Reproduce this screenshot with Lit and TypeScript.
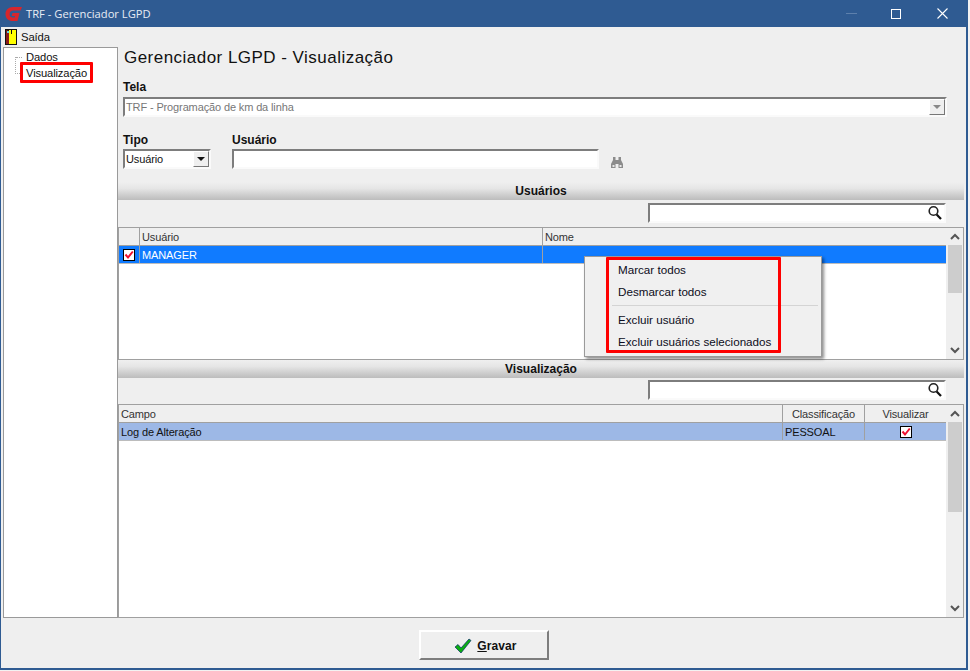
import { LitElement, html, css, svg } from "lit";
import { customElement } from "lit/decorators.js";

const check = html`<span class="chk"><svg width="10" height="10" viewBox="0 0 10 10"><path d="M1.5 4.5 L4 7.5 L8.8 1.5" fill="none" stroke="#ee1030" stroke-width="2"/></svg></span>`;
const lens = html`<svg class="lens" width="16" height="16" viewBox="0 0 16 16"><circle cx="6.5" cy="6" r="4.3" fill="none" stroke="#222" stroke-width="1.6"/><path d="M9.6 9.4 L14 14" stroke="#111" stroke-width="2.2"/></svg>`;
const upArrow = svg`<path d="M1 6 L5 2 L9 6" fill="none" stroke="#555" stroke-width="2"/>`;
const downArrow = svg`<path d="M1 2 L5 6 L9 2" fill="none" stroke="#555" stroke-width="2"/>`;

@customElement("app-root")
export class AppRoot extends LitElement {
  static styles = css`
    :host { display: block; width: 970px; height: 671px; background: #f2f2f2; font-family: "Liberation Sans", Arial, sans-serif; font-size: 11px; letter-spacing: -0.13px; color: #111; overflow: hidden; }
    .win { position: relative; width: 968px; height: 670px; box-sizing: border-box; background: #efefef; border: solid #2f5b92; border-width: 0 2px 2px 1px; display: flex; flex-direction: column; }
    .title { height: 27px; flex: none; background: #2f5b92; color: #fff; display: flex; align-items: center; padding-left: 4px; }
    .title .logo { margin-right: 4px; }
    .title .name { flex: 1; color: #e8edf4; font-family: "Open Sans", sans-serif; font-size: 11.2px; letter-spacing: 0; }
    .wb { display: flex; align-items: center; }
    .wb svg { display: block; }
    .wb .b1 { margin-right: 34px; }
    .wb .b2 { margin-right: 36px; }
    .wb .b3 { margin-right: 18px; }
    .menu { height: 20px; flex: none; display: flex; align-items: center; padding-left: 4px; gap: 4px; background: #efefef; font-size: 11.3px; }
    .content { height: 571px; flex: none; display: flex; padding-left: 2px; }
    .tree { width: 115px; box-sizing: border-box; flex: none; background: #fff; border: 1px solid #9a9a9a; height: 571px; position: relative; padding: 1px 0 0 22px; line-height: 16px; font-size: 11.2px; }
    .tree .n { display: block; height: 16px; }
    .tree .dots { position: absolute; left: 11px; top: 9px; width: 6px; height: 16px; border-left: 1px dotted #aaa; border-bottom: 1px dotted #aaa; }
    .tree .dots::before { content: ""; position: absolute; left: 0; top: 0; width: 6px; border-top: 1px dotted #aaa; }
    .main { flex: 1; display: flex; flex-direction: column; min-width: 0; }
    h1 { font-weight: 400; font-size: 17px; letter-spacing: 0.47px; margin: 0 0 0 6px; height: 31px; line-height: 21px; color: #111; }
    .lbl { font-weight: 700; font-size: 12px; letter-spacing: 0; line-height: 14px; }
    .tela { margin: 2px 0 0 5px; width: 824px; }
    .field { height: 20px; box-sizing: border-box; background: #fff; border: 2px solid; border-color: #7d7d7d #fafafa #fafafa #7d7d7d; display: flex; align-items: center; position: relative; }
    .tela .field { margin-top: 3px; padding-left: 1px; color: #777; }
    .cbtn { position: absolute; right: 0; top: 0; bottom: 0; width: 16px; background: #efefef; border: 1px solid; border-color: #fff #777 #777 #fff; box-sizing: border-box; display: flex; align-items: center; justify-content: center; }
    .tri { width: 0; height: 0; border: 4px solid transparent; border-top: 4px solid #888; border-bottom: 0; }
    .tri.dark { border-top-color: #111; }
    .row { display: flex; margin: 16px 0 0 5px; }
    .tipo { width: 88px; margin-right: 21px; }
    .tipo .field { margin-top: 2px; padding-left: 1px; }
    .user { width: 367px; }
    .user .field { margin-top: 2px; }
    .bino { align-self: flex-end; margin: 0 0 1px 12px; height: 11px; }
    .bar { height: 18px; background: linear-gradient(#efefef 0%, #e6e6e6 35%, #bcbcbc 100%); text-align: center; font-weight: 700; font-size: 12px; letter-spacing: 0; line-height: 19px; margin-right: 2px; flex: none; }
    .bar.first { margin-top: 13px; }
    .search { margin: 3px 0 4px 530px; width: 298px; flex: none; padding: 0; }
    .search.s2 { margin-top: 2px; }
    .search .lens { position: absolute; right: 1px; top: 0; }
    .grid { position: relative; border: 1px solid #a0a0a0; background: #fff; display: flex; width: 846px; box-sizing: border-box; flex: none; }
    .g1 { height: 133px; }
    .g2 { height: 214px; }
    .tbl { width: 827px; flex: none; }
    .hdr, .tr { display: flex; height: 18px; box-sizing: border-box; }
    .hdr { background: #efefef; border-bottom: 1px solid #a0a0a0; color: #333; line-height: 18px; }
    .tr { border-bottom: 1px solid #bcbcbc; line-height: 19px; }
    .c { box-sizing: border-box; padding-left: 2px; border-right: 1px solid #a0a0a0; overflow: hidden; white-space: nowrap; }
    .c:last-child { border-right: 0; }
    .sel { background: #107bff; color: #fff; }
    .sel2 { background: #9db8e6; color: #111; }
    .w0 { width: 21px; padding: 0; display: flex; align-items: center; justify-content: center; }
    .w1 { width: 403px; }
    .w2 { flex: 1; }
    .wa { width: 664px; }
    .wb2 { width: 82px; }
    .center { text-align: center; padding: 0; }
    .wc { flex: 1; text-align: center; padding: 0; display: flex; align-items: center; justify-content: center; }
    .chk { width: 10px; height: 10px; background: #fff; border: 1px solid #000; display: block; }
    .chk svg { display: block; }
    .sb { flex: 1; background: #efefef; display: flex; flex-direction: column; align-items: center; justify-content: space-between; position: relative; }
    .sb svg { display: block; margin: 5px 0; position: relative; }
    .thumb { position: absolute; top: 17px; left: 2px; right: 1px; background: #cdcdcd; height: 48px; }
    .g2 .thumb { height: 90px; }
    .foot { height: 50px; flex: none; display: flex; justify-content: center; padding-top: 12px; box-sizing: border-box; }
    .btn { width: 130px; height: 30px; box-sizing: border-box; background: #efefef; border: 2px solid; border-color: #fff #7d7d7d #7d7d7d #fff; display: flex; align-items: center; justify-content: center; gap: 5px; font-weight: 700; font-size: 12px; letter-spacing: 0.1px; padding: 2px 0 0 4px; }
    .ctx { position: absolute; left: 583px; top: 256px; width: 238px; height: 101px; box-sizing: border-box; background: #f0f0f0; border: 1px solid #9a9a9a; box-shadow: 2px 2px 3px rgba(0,0,0,.45); padding: 2px; display: flex; flex-direction: column; font-size: 11.65px; letter-spacing: 0; }
    .ctx .it { height: 22px; line-height: 22px; padding-left: 31px; flex: none; color: #0c0c20; }
    .ctx .sep { height: 1px; background: #d4d4d4; margin: 2px 1px 3px 25px; flex: none; }
    .red { position: absolute; border: 3px solid #fe0000; border-radius: 1px; box-sizing: border-box; pointer-events: none; }
    .red.r1 { left: 19px; top: 62px; width: 73px; height: 21px; }
    .red.r2 { left: 605px; top: 257px; width: 175px; height: 96px; }
  `;

  render() {
    return html`
      <div class="win">
        <div class="title">
          <svg class="logo" width="17" height="16" viewBox="0 0 17 16"><path d="M17 1 H8 C3.5 1 0.5 4 0.5 8 C0.5 12.5 3.5 15 8 15 H12.5 L14.5 7 H7.5 L6.7 10 H10 L9.6 11.5 H8 C5.8 11.5 4.6 10.2 4.6 8.2 C4.6 6 6 4.6 8.4 4.6 H15.6 Z" fill="#d8262c"/></svg>
          <span class="name">TRF - Gerenciador LGPD</span>
          <div class="wb">
            <svg class="b1" width="11" height="2"><rect width="11" height="1" fill="#5d80ac"/></svg>
            <svg class="b2" width="10" height="10"><rect x=".5" y=".5" width="9" height="9" fill="none" stroke="#fff"/></svg>
            <svg class="b3" width="11" height="11"><path d="M.5 .5 L10.5 10.5 M10.5 .5 L.5 10.5" stroke="#fff" stroke-width="1.1"/></svg>
          </div>
        </div>
        <div class="menu">
          <svg width="12" height="16" viewBox="0 0 12 16"><rect width="12" height="16" fill="#111"/><rect x="4" y="1" width="7" height="14" fill="#ffff00"/><path d="M1 1 L4 2 V15 L1 15 Z" fill="#8a1c1c"/><rect x="2" y="2" width="2" height="2" fill="#5fd0e0"/><rect x="6" y="1" width="1" height="4" fill="#111"/></svg>
          <span>Saída</span>
        </div>
        <div class="content">
          <div class="tree">
            <span class="dots"></span>
            <span class="n">Dados</span>
            <span class="n">Visualização</span>
          </div>
          <div class="main">
            <h1>Gerenciador LGPD - Visualização</h1>
            <div class="tela">
              <div class="lbl">Tela</div>
              <div class="field">TRF - Programação de km da linha<span class="cbtn"><span class="tri"></span></span></div>
            </div>
            <div class="row">
              <div class="tipo">
                <div class="lbl">Tipo</div>
                <div class="field">Usuário<span class="cbtn"><span class="tri dark"></span></span></div>
              </div>
              <div class="user">
                <div class="lbl">Usuário</div>
                <div class="field"></div>
              </div>
              <svg class="bino" width="12" height="11" viewBox="0 0 12 11"><path d="M2 0 H4.5 V3 H7.5 V0 H10 V3 L12 7 V11 H7.5 V7 H4.5 V11 H0 V7 L2 3 Z" fill="#8c8c8c"/><rect x="1.5" y="8" width="2" height="2" fill="#e8e8e8"/><rect x="8.5" y="8" width="2" height="2" fill="#e8e8e8"/></svg>
            </div>
            <div class="bar first">Usuários</div>
            <div class="field search">${lens}</div>
            <div class="grid g1">
              <div class="tbl">
                <div class="hdr"><div class="c w0"></div><div class="c w1">Usuário</div><div class="c w2">Nome</div></div>
                <div class="tr sel"><div class="c w0">${check}</div><div class="c w1">MANAGER</div><div class="c w2"></div></div>
              </div>
              <div class="sb"><div class="thumb"></div><svg width="10" height="8">${upArrow}</svg><svg width="10" height="8">${downArrow}</svg></div>
            </div>
            <div class="bar">Visualização</div>
            <div class="field search s2">${lens}</div>
            <div class="grid g2">
              <div class="tbl">
                <div class="hdr"><div class="c wa">Campo</div><div class="c wb2 center">Classificação</div><div class="c wc">Visualizar</div></div>
                <div class="tr sel2"><div class="c wa">Log de Alteração</div><div class="c wb2">PESSOAL</div><div class="c wc">${check}</div></div>
              </div>
              <div class="sb"><div class="thumb"></div><svg width="10" height="8">${upArrow}</svg><svg width="10" height="8">${downArrow}</svg></div>
            </div>
          </div>
        </div>
        <div class="foot">
          <div class="btn">
            <svg width="18" height="16" viewBox="0 0 18 16"><path d="M1 9 L4 6.5 L7 10 L15 1 L17 2.5 L7 15 Z" fill="#0cae12" stroke="#0a2a6a" stroke-width=".7"/></svg>
            <span><u>G</u>ravar</span>
          </div>
        </div>
        <div class="ctx">
          <div class="it">Marcar todos</div>
          <div class="it">Desmarcar todos</div>
          <div class="sep"></div>
          <div class="it">Excluir usuário</div>
          <div class="it">Excluir usuários selecionados</div>
        </div>
        <div class="red r1"></div>
        <div class="red r2"></div>
      </div>
    `;
  }
}
